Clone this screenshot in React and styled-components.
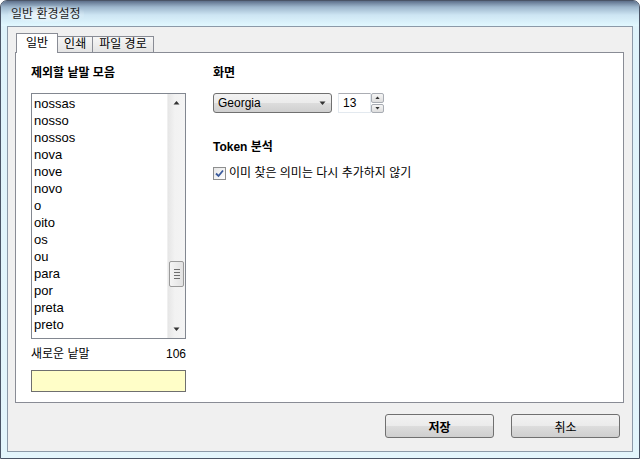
import React from "react";
import styled, { createGlobalStyle } from "styled-components";

const GlobalStyle = createGlobalStyle`
  html, body {
    margin: 0;
    padding: 0;
    background: #ffffff;
  }
  body {
    font-family: "Liberation Sans", "Noto Sans CJK KR", sans-serif;
    font-size: 12px;
    color: #000;
  }
`;

const KO = `"Liberation Sans", "Noto Sans CJK KR", sans-serif`;

const Window = styled.div`
  width: 640px;
  height: 459px;
  box-sizing: border-box;
  display: flex;
  flex-direction: column;
  border: 1px solid #4a5466;
  border-radius: 7px 7px 0 0;
  background: linear-gradient(to bottom, #8ea4bd 0, #c7dcea 10px, #dff3fb 22px, #e3f5fc 100%);
  overflow: hidden;
`;

const TitleBar = styled.div`
  height: 25px;
  flex: none;
  display: flex;
  align-items: center;
  padding-left: 7px;
  background: linear-gradient(to bottom, #5d6f8a 0, #9db6cc 6px, #cde5f3 14px, #e2f8ff 25px);
`;

const Title = styled.span`
  font-family: ${KO};
  font-size: 12px;
  line-height: 14px;
  color: #1e1e1e;
  padding: 1px 3px;
  border-radius: 6px;
  background: radial-gradient(ellipse at center, rgba(255,255,255,0.8), rgba(255,255,255,0) 80%);
`;

const Client = styled.div`
  flex: 1;
  margin: 0 6px 6px 6px;
  border: 1px solid #8c99a8;
  background: #f0f0f0;
  display: flex;
  flex-direction: column;
  padding: 6px 8px 13px 7px;
`;

const TabRow = styled.div`
  display: flex;
  align-items: flex-end;
  height: 20px;
  padding-left: 1px;
  position: relative;
  z-index: 1;
  margin-bottom: -1px;
`;

const Tab = styled.div`
  box-sizing: border-box;
  height: ${p => (p.$active ? "20px" : "17px")};
  padding: 0 ${p => (p.$active ? "9px" : "6px")};
  margin-left: ${p => (p.$first ? "0" : "-1px")};
  border: 1px solid #898c95;
  border-bottom: ${p => (p.$active ? "none" : "1px solid #898c95")};
  background: ${p =>
    p.$active ? "#ffffff" : "linear-gradient(to bottom, #f6f6f6, #e4e4e4)"};
  font-family: ${KO};
  font-size: 12px;
  line-height: ${p => (p.$active ? "18px" : "15px")};
  color: #000;
  position: relative;
  z-index: ${p => (p.$active ? 2 : 1)};
`;

const Panel = styled.div`
  flex: 1;
  border: 1px solid #898c95;
  background: #ffffff;
  display: grid;
  grid-template-columns: 155px 1fr;
  column-gap: 27px;
  padding: 13px 15px 10px 15px;
`;

const Column = styled.div`
  display: flex;
  flex-direction: column;
`;

const Heading = styled.div`
  font-family: ${KO};
  font-size: 12px;
  font-weight: bold;
  line-height: 15px;
  height: 15px;
  margin-bottom: ${p => p.$gap || 12}px;
`;

const ListBox = styled.div`
  height: 246px;
  box-sizing: border-box;
  border: 1px solid #828790;
  display: flex;
  background: #fff;
  overflow: hidden;
`;

const ListItems = styled.div`
  flex: 1;
  padding: 1px 0 0 2px;
  overflow: hidden;
`;

const ListItem = styled.div`
  font-family: "Liberation Sans", sans-serif;
  font-size: 13px;
  line-height: 17px;
  height: 17px;
  color: #000;
`;

const ScrollBar = styled.div`
  width: 17px;
  flex: none;
  background: linear-gradient(to right, #e6e6e6, #f2f2f2 40%, #f4f4f4);
  border-left: 1px solid #f0f0f0;
  display: flex;
  flex-direction: column;
  align-items: center;
`;

const ArrowBox = styled.div`
  height: 17px;
  width: 17px;
  display: flex;
  align-items: center;
  justify-content: center;
`;

const Track = styled.div`
  flex: 1;
  width: 100%;
  display: flex;
  flex-direction: column;
  justify-content: flex-end;
  padding-bottom: 34px;
  box-sizing: border-box;
`;

const Thumb = styled.div`
  height: 24px;
  margin: 0 1px;
  border: 1px solid #9a9a9a;
  border-radius: 2px;
  background: linear-gradient(to right, #f4f4f4, #e2e2e2);
  display: flex;
  flex-direction: column;
  align-items: center;
  justify-content: center;
  gap: 2px;
`;

const Grip = styled.div`
  width: 6px;
  height: 1px;
  background: #6e6e6e;
`;

const CountRow = styled.div`
  display: flex;
  justify-content: space-between;
  margin-top: 8px;
  font-family: ${KO};
  font-size: 12px;
  line-height: 14px;
  height: 14px;
`;

const WordInput = styled.div`
  margin-top: 9px;
  height: 22px;
  box-sizing: border-box;
  border: 1px solid #6f6f6f;
  background: #fffec8;
`;

const ControlRow = styled.div`
  display: flex;
  align-items: center;
  gap: 6px;
  height: 20px;
  margin-bottom: 27px;
`;

const Combo = styled.div`
  width: 119px;
  height: 20px;
  box-sizing: border-box;
  border: 1px solid #707070;
  border-radius: 3px;
  background: linear-gradient(to bottom, #f2f2f2 0, #ebebeb 50%, #dddddd 50%, #cfcfcf 100%);
  display: flex;
  align-items: center;
  justify-content: space-between;
  padding: 0 5px 0 4px;
  font-family: "Liberation Sans", sans-serif;
  font-size: 12px;
  color: #000;
`;

const Spin = styled.div`
  display: flex;
  height: 20px;
`;

const SpinField = styled.div`
  width: 33px;
  box-sizing: border-box;
  border: 1px solid #e3e9ef;
  border-top-color: #abadb3;
  background: #fff;
  font-family: "Liberation Sans", sans-serif;
  font-size: 12px;
  line-height: 18px;
  padding-left: 4px;
`;

const SpinButtons = styled.div`
  width: 13px;
  display: flex;
  flex-direction: column;
  gap: 1px;
`;

const SpinButton = styled.div`
  flex: 1;
  border: 1px solid #a8acb3;
  border-radius: 2px;
  background: linear-gradient(to bottom, #f5f5f5, #dedede);
  display: flex;
  align-items: center;
  justify-content: center;
`;

const CheckRow = styled.label`
  display: flex;
  align-items: center;
  gap: 3px;
  margin-top: -1px;
  font-family: ${KO};
  font-size: 12px;
  line-height: 14px;
`;

const CheckBox = styled.div`
  width: 13px;
  height: 13px;
  box-sizing: border-box;
  border: 1px solid #8e8f8f;
  background: linear-gradient(135deg, #e6e6e6, #ffffff);
  display: flex;
  align-items: center;
  justify-content: center;
`;

const ButtonRow = styled.div`
  display: flex;
  justify-content: flex-end;
  gap: 17px;
  padding-top: 11px;
  padding-right: 4px;
`;

const Button = styled.button`
  width: 109px;
  height: 24px;
  border: 1px solid #707070;
  border-radius: 3px;
  background: linear-gradient(to bottom, #f2f2f2 0, #ebebeb 50%, #dddddd 50%, #cfcfcf 100%);
  font-family: ${KO};
  font-size: 12px;
  font-weight: ${p => (p.$primary ? "bold" : "normal")};
  color: #000;
  padding: 0;
`;

const words = [
  "nossas", "nosso", "nossos", "nova", "nove", "novo", "o", "oito",
  "os", "ou", "para", "por", "preta", "preto"
];

const Tri = ({ up, size = 5 }) => (
  <svg width={size + 2} height={size} viewBox="0 0 7 4">
    <path d={up ? "M0.5 4 L3.5 0.5 L6.5 4 Z" : "M0.5 0 L3.5 3.5 L6.5 0 Z"} fill="#333" />
  </svg>
);

export default function App() {
  return (
    <>
      <GlobalStyle />
      <Window>
        <TitleBar>
          <Title>일반 환경설정</Title>
        </TitleBar>
        <Client>
          <TabRow>
            <Tab $active $first>일반</Tab>
            <Tab>인쇄</Tab>
            <Tab>파일 경로</Tab>
          </TabRow>
          <Panel>
            <Column>
              <Heading>제외할 낱말 모음</Heading>
              <ListBox>
                <ListItems>
                  {words.map(w => (
                    <ListItem key={w}>{w}</ListItem>
                  ))}
                </ListItems>
                <ScrollBar>
                  <ArrowBox><Tri up /></ArrowBox>
                  <Track>
                    <Thumb>
                      <Grip />
                      <Grip />
                      <Grip />
                      <Grip />
                    </Thumb>
                  </Track>
                  <ArrowBox><Tri /></ArrowBox>
                </ScrollBar>
              </ListBox>
              <CountRow>
                <span>새로운 낱말</span>
                <span>106</span>
              </CountRow>
              <WordInput />
            </Column>
            <Column>
              <Heading>화면</Heading>
              <ControlRow>
                <Combo>
                  <span>Georgia</span>
                  <Tri size={5} />
                </Combo>
                <Spin>
                  <SpinField>13</SpinField>
                  <SpinButtons>
                    <SpinButton><Tri up size={3} /></SpinButton>
                    <SpinButton><Tri size={3} /></SpinButton>
                  </SpinButtons>
                </Spin>
              </ControlRow>
              <Heading $gap={12}>Token 분석</Heading>
              <CheckRow>
                <CheckBox>
                  <svg width="9" height="9" viewBox="0 0 9 9">
                    <path d="M1 4.5 L3.5 7 L8 1.5" stroke="#3a5a9c" strokeWidth="1.8" fill="none" />
                  </svg>
                </CheckBox>
                <span>이미 찾은 의미는 다시 추가하지 않기</span>
              </CheckRow>
            </Column>
          </Panel>
          <ButtonRow>
            <Button $primary>저장</Button>
            <Button>취소</Button>
          </ButtonRow>
        </Client>
      </Window>
    </>
  );
}
